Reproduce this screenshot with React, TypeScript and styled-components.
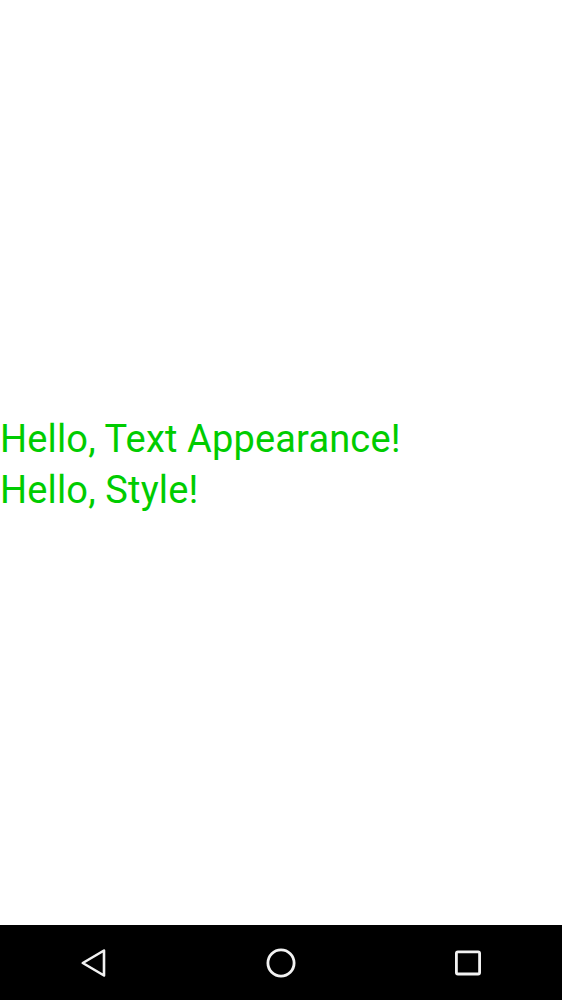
import React from "react";
import styled, { createGlobalStyle } from "styled-components";

const GlobalStyle = createGlobalStyle`
  html, body {
    margin: 0;
    padding: 0;
    background: #ffffff;
  }
`;

const Screen = styled.div`
  display: flex;
  flex-direction: column;
  height: 1000px;
  width: 562px;
  background: #ffffff;
`;

const Content = styled.main`
  flex: 1;
  display: flex;
  flex-direction: column;
  justify-content: center;
  padding-top: 4px;
`;

const Greeting = styled.p`
  margin: 0;
  font-family: Roboto, "Noto Sans", sans-serif;
  font-size: 38px;
  line-height: 51px;
  letter-spacing: 0.15px;
  color: #00cc00;
  white-space: nowrap;
`;

const NavBar = styled.nav`
  height: 75px;
  background: #000000;
  display: flex;
  align-items: center;
`;

const NavButton = styled.button`
  flex: 1;
  height: 75px;
  border: none;
  background: transparent;
  padding: 0;
  display: flex;
  align-items: center;
  justify-content: center;
`;

const App = (): JSX.Element => {
  return (
    <Screen>
      <GlobalStyle />
      <Content>
        <Greeting>Hello, Text Appearance!</Greeting>
        <Greeting>Hello, Style!</Greeting>
      </Content>
      <NavBar>
        <NavButton aria-label="Back">
          <svg width="30" height="30" viewBox="0 0 30 30">
            <path
              d="M25 2.5 L3.8 15 L25 27.5 Z"
              fill="none"
              stroke="#f2f2f2"
              strokeWidth="2.6"
              strokeLinejoin="round"
            />
          </svg>
        </NavButton>
        <NavButton aria-label="Home">
          <svg width="30" height="30" viewBox="0 0 30 30">
            <circle cx="15" cy="15" r="13.1" fill="none" stroke="#f2f2f2" strokeWidth="2.8" />
          </svg>
        </NavButton>
        <NavButton aria-label="Recents">
          <svg width="30" height="30" viewBox="0 0 30 30">
            <rect
              x="3.4"
              y="3.8"
              width="23.2"
              height="22.2"
              rx="1.5"
              fill="none"
              stroke="#f2f2f2"
              strokeWidth="2.8"
            />
          </svg>
        </NavButton>
      </NavBar>
    </Screen>
  );
};

export default App;
